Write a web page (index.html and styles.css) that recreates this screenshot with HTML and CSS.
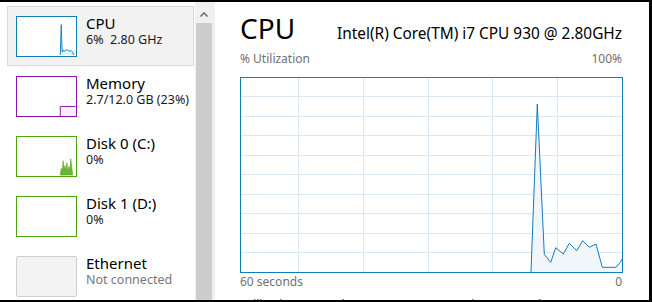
FILE: index.html
```html
<!DOCTYPE html>
<html lang="en">
<head>
  <meta charset="UTF-8" />
  <title>Task Manager - Performance</title>
  <link rel="stylesheet" href="styles.css">
</head>
<body>
  <div class="window">
    <!-- Resource list -->
    <nav class="sidebar">
      <div class="perf-item selected">
        <svg class="thumb thumb-cpu" viewBox="0 0 61 41">
          <polygon class="fill" points="45,40 46,8 47,37 48,35 50,36 52,34 54,36 56,35 58,37 59,40" />
          <polyline points="45,40 46,8 47,37 48,35 50,36 52,34 54,36 56,35 58,37 59,40" />
        </svg>
        <div class="perf-text">
          <span class="perf-name">CPU</span>
          <span class="perf-value">6%&nbsp;&nbsp;2.80 GHz</span>
        </div>
      </div>
      <div class="perf-item">
        <svg class="thumb thumb-mem" viewBox="0 0 61 41">
          <rect class="fill" x="45" y="31" width="16" height="10" />
          <polyline points="45,41 45,31 61,31" />
        </svg>
        <div class="perf-text">
          <span class="perf-name">Memory</span>
          <span class="perf-value">2.7/12.0 GB (23%)</span>
        </div>
      </div>
      <div class="perf-item">
        <svg class="thumb thumb-disk" viewBox="0 0 61 41">
          <polygon class="spikes" points="45,40 46,33 47,37 48,25 49,35 50,30 51,36 52,27 53,39 54,31 55,35 56,23 58,40" />
        </svg>
        <div class="perf-text">
          <span class="perf-name">Disk 0 (C:)</span>
          <span class="perf-value">0%</span>
        </div>
      </div>
      <div class="perf-item">
        <svg class="thumb thumb-disk" viewBox="0 0 61 41"></svg>
        <div class="perf-text">
          <span class="perf-name">Disk 1 (D:)</span>
          <span class="perf-value">0%</span>
        </div>
      </div>
      <div class="perf-item">
        <div class="thumb thumb-off"></div>
        <div class="perf-text">
          <span class="perf-name">Ethernet</span>
          <span class="perf-value muted">Not connected</span>
        </div>
      </div>
    </nav>

    <div class="scrollbar">
      <div class="scroll-arrow">
        <svg viewBox="0 0 8 5" width="8" height="5">
          <polyline points="0.5,4.5 4,1 7.5,4.5" />
        </svg>
      </div>
      <div class="scroll-thumb"></div>
    </div>

    <!-- CPU detail -->
    <main class="detail">
      <div class="detail-head">
        <h1>CPU</h1>
        <span class="cpu-model">Intel(R) Core(TM) i7 CPU 930 @ 2.80GHz</span>
      </div>
      <div class="axis-row">
        <span>% Utilization</span>
        <span>100%</span>
      </div>
      <svg class="graph" viewBox="0 0 383 196">
        <g class="grid">
          <line x1="58.5" y1="0" x2="58.5" y2="196" />
          <line x1="123.5" y1="0" x2="123.5" y2="196" />
          <line x1="188.5" y1="0" x2="188.5" y2="196" />
          <line x1="252.5" y1="0" x2="252.5" y2="196" />
          <line x1="317.5" y1="0" x2="317.5" y2="196" />
          <line x1="0" y1="19.5" x2="383" y2="19.5" />
          <line x1="0" y1="39.5" x2="383" y2="39.5" />
          <line x1="0" y1="58.5" x2="383" y2="58.5" />
          <line x1="0" y1="78.5" x2="383" y2="78.5" />
          <line x1="0" y1="97.5" x2="383" y2="97.5" />
          <line x1="0" y1="117.5" x2="383" y2="117.5" />
          <line x1="0" y1="136.5" x2="383" y2="136.5" />
          <line x1="0" y1="156.5" x2="383" y2="156.5" />
          <line x1="0" y1="175.5" x2="383" y2="175.5" />
        </g>
        <polygon class="area" points="291,195 297.3,27 304.3,177.3 310.7,185.3 315.7,170.7 323.3,177 329.3,166.3 336.7,173.7 342.7,163.7 349.3,170.3 356,167 362.3,190.3 376,190.3 380.7,184.7 382,182 382,195" />
        <polyline class="line" points="291,195 297.3,27 304.3,177.3 310.7,185.3 315.7,170.7 323.3,177 329.3,166.3 336.7,173.7 342.7,163.7 349.3,170.3 356,167 362.3,190.3 376,190.3 380.7,184.7 382,182" />
        <rect class="frame" x="0.5" y="0.5" width="382" height="195" />
      </svg>
      <div class="axis-row axis-bottom">
        <span>60 seconds</span>
        <span>0</span>
      </div>
      <div class="stats-row">
        <span class="stat stat-util">Utilization</span>
        <span class="stat stat-speed">Speed</span>
        <span class="stat stat-max">Maximum speed:</span>
        <span class="stat">2.80 GHz</span>
      </div>
    </main>
  </div>
</body>
</html>
```

FILE: styles.css
```css
body {
  margin: 0;
  width: 652px;
  height: 302px;
  overflow: hidden;
  background: #fff;
  font-family: "Noto Sans", "Open Sans", sans-serif;
  color: #000;
}

.window {
  box-sizing: border-box;
  width: 652px;
  height: 302px;
  border-top: 2px solid #000;
  border-right: 3px solid #000;
  border-bottom: 2px solid #000;
  display: flex;
  overflow: hidden;
  background: #fff;
}

/* sidebar list */
.sidebar {
  width: 195px;
  flex-shrink: 0;
  box-sizing: border-box;
  padding: 4px 1px 0 7px;
}

.perf-item {
  box-sizing: border-box;
  width: 187px;
  height: 60px;
  padding: 9px 0 0 8px;
  border: 1px solid transparent;
  display: flex;
}

.perf-item.selected {
  background: #f2f2f2;
  border-color: #dadada;
}

.thumb {
  box-sizing: border-box;
  width: 61px;
  height: 41px;
  flex-shrink: 0;
  margin-right: 9px;
  background: #fff;
  border: 1px solid;
  display: block;
}

.thumb polyline {
  fill: none;
  stroke-width: 1;
}

.thumb-cpu {
  border-color: #117dbb;
}

.thumb-cpu polyline {
  stroke: #117dbb;
}

.thumb-cpu .fill {
  fill: #e8f2f9;
}

.thumb-mem {
  border-color: #8b12ae;
}

.thumb-mem polyline {
  stroke: #8b12ae;
}

.thumb-mem .fill {
  fill: #f7f0f9;
}

.thumb-disk {
  border-color: #4da60c;
}

.thumb-disk .spikes {
  fill: #6ab53a;
  stroke: #4da60c;
  stroke-width: 0.6;
}

.thumb-off {
  background: #f3f3f3;
  border-color: #cfcfcf;
  border-radius: 2px;
}

.perf-text {
  display: flex;
  flex-direction: column;
  margin-top: -2px;
}

.perf-name {
  font-size: 15px;
  line-height: 18px;
  white-space: nowrap;
}

.perf-value {
  font-size: 12.5px;
  line-height: 16px;
  color: #1a1a1a;
  white-space: nowrap;
}

.perf-value.muted {
  color: #777;
}

/* scrollbar */
.scrollbar {
  width: 20px;
  flex-shrink: 0;
  background: #f0f0f0;
  display: flex;
  flex-direction: column;
  align-items: center;
}

.scroll-arrow {
  height: 21px;
  padding-top: 10px;
  box-sizing: border-box;
  margin-right: 3px;
}

.scroll-arrow svg {
  display: block;
  fill: none;
  stroke: #606060;
  stroke-width: 1.4;
}

.scroll-thumb {
  width: 16px;
  flex: 1;
  margin-right: 3px;
  background: #cdcdcd;
}

/* detail panel */
.detail {
  flex: 1;
  min-width: 0;
  padding: 0 26px 0 25px;
}

.detail-head {
  display: flex;
  justify-content: space-between;
  align-items: baseline;
  margin-top: 9px;
  height: 34px;
}

.detail-head h1 {
  margin: 0;
  font-size: 28px;
  font-weight: normal;
  line-height: 34px;
}

.cpu-model {
  font-size: 15.4px;
  margin-right: 1px;
  white-space: nowrap;
}

.axis-row {
  display: flex;
  justify-content: space-between;
  font-size: 12px;
  line-height: 16px;
  color: #707070;
  margin-top: 6px;
  padding-right: 1px;
}

.graph {
  display: block;
  width: 383px;
  height: 196px;
  margin-top: 10px;
}

.graph .grid line {
  stroke: #d9e8f2;
  stroke-width: 1;
}

.graph .area {
  fill: #f1f6fb;
}

.graph .line {
  fill: none;
  stroke: #117dbb;
  stroke-width: 1;
}

.graph .frame {
  fill: none;
  stroke: #117dbb;
  stroke-width: 1;
}

.axis-bottom {
  margin-top: 1px;
}

.stats-row {
  display: flex;
  margin-top: 7px;
  font-size: 12px;
  line-height: 16px;
  color: #333;
  white-space: nowrap;
  overflow: hidden;
}

.stat {
  flex-shrink: 0;
}

.stat-util {
  width: 70px;
}

.stat-speed {
  width: 137px;
}

.stat-max {
  width: 108px;
}
```
